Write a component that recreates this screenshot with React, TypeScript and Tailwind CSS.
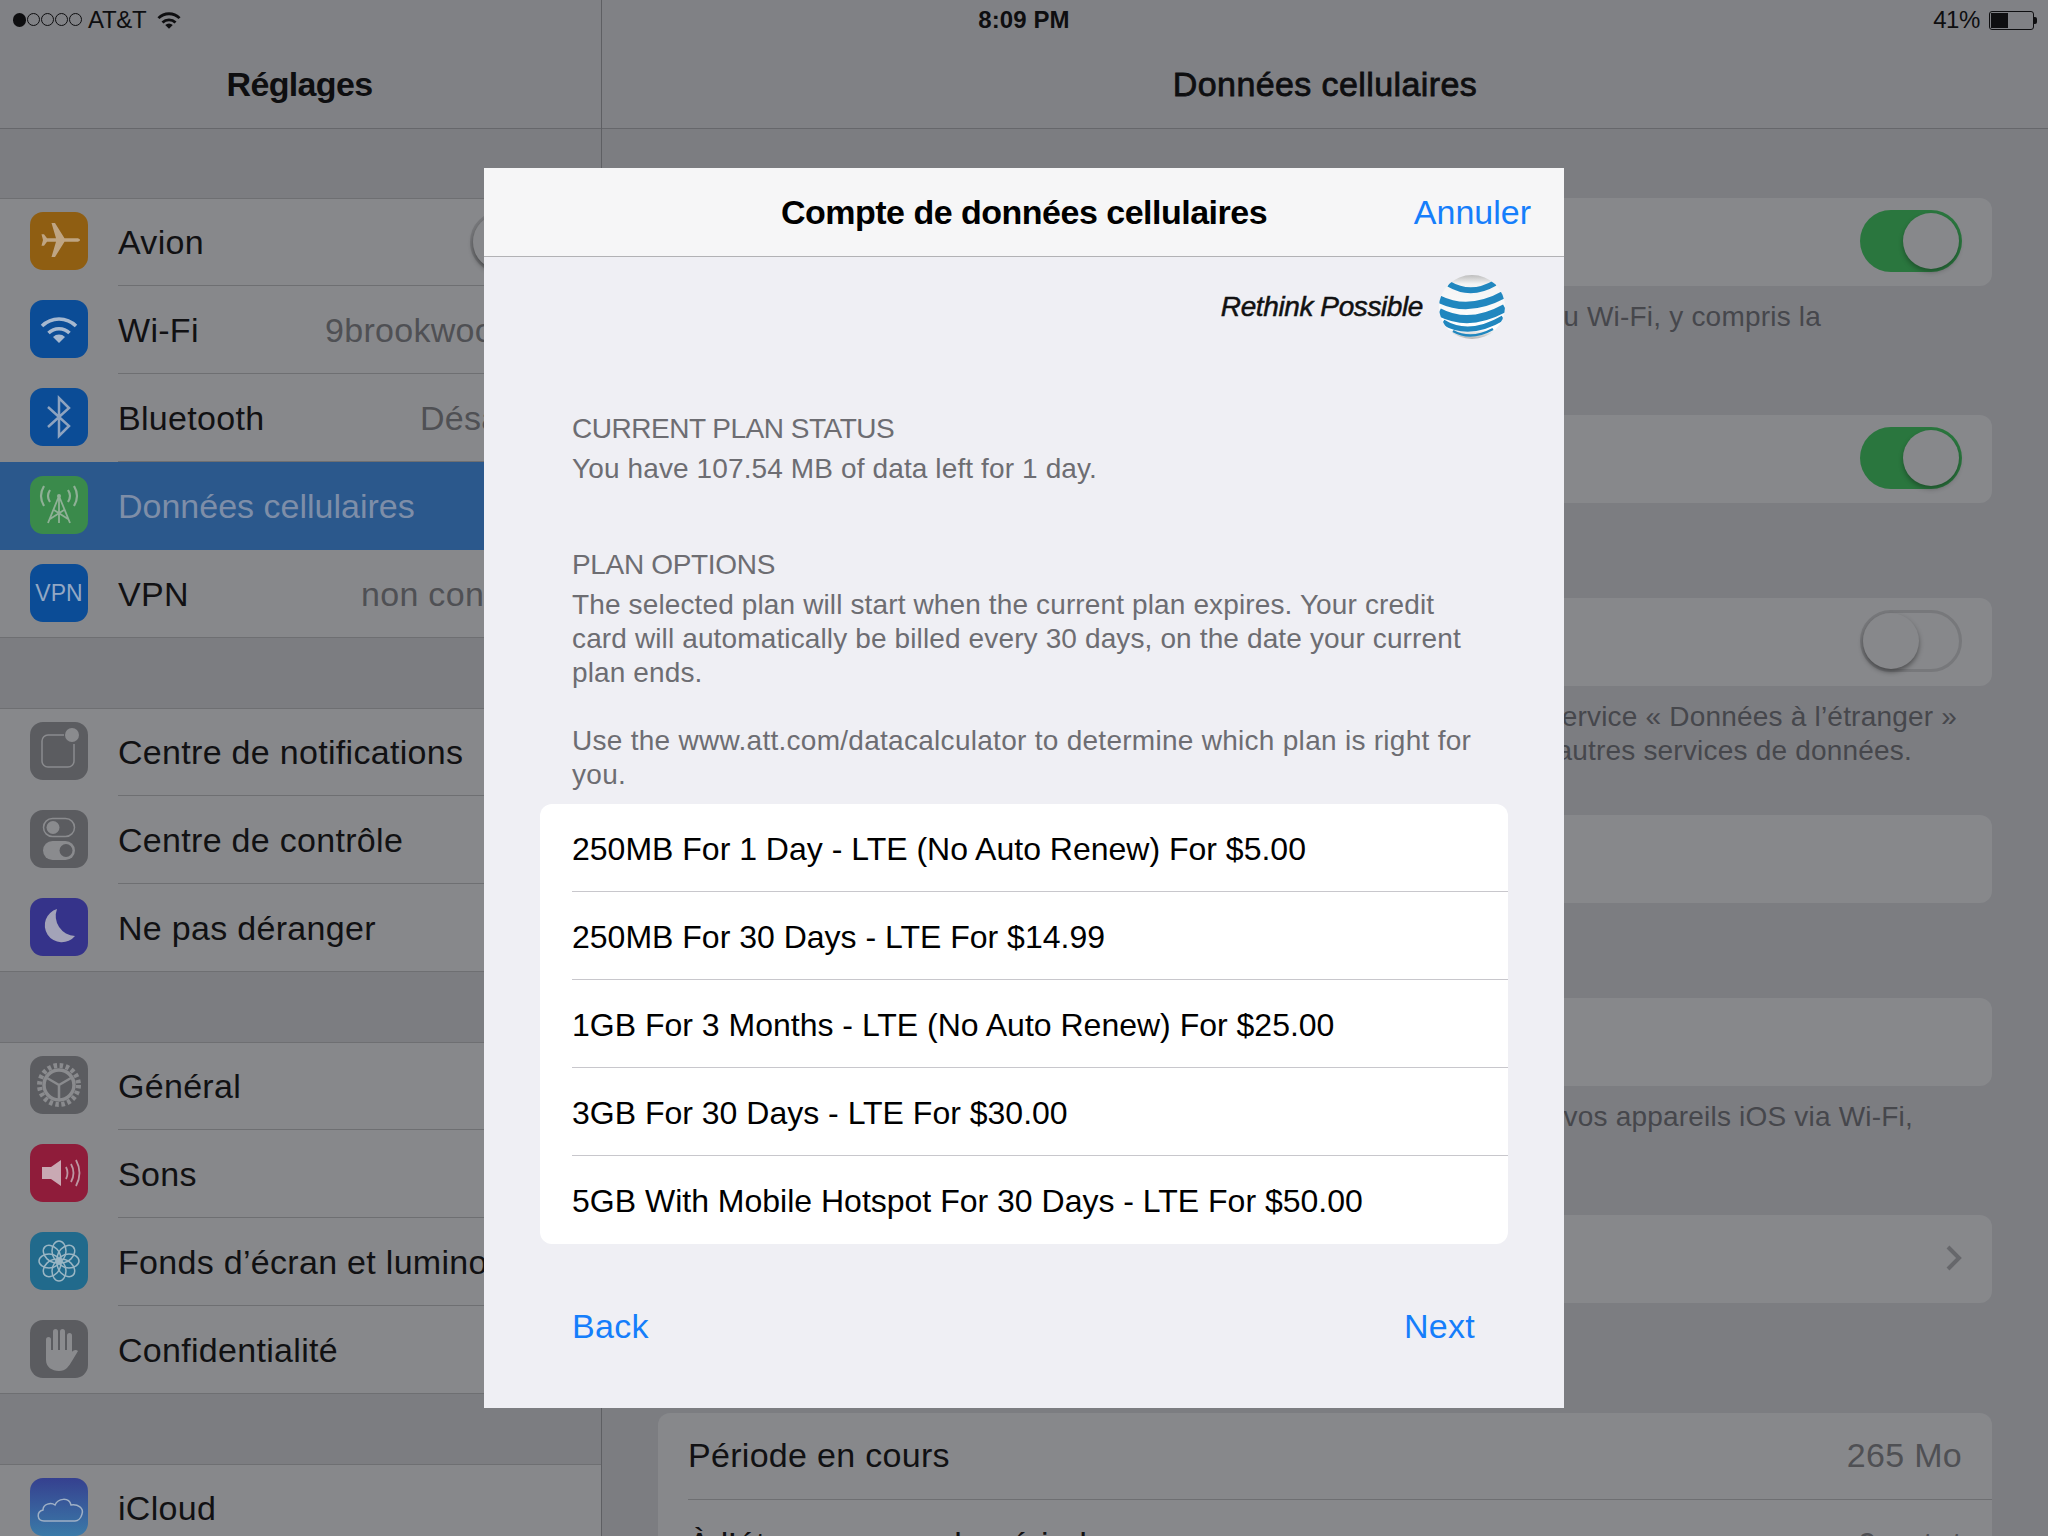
import type { ReactNode } from "react";

const SANS = "font-['Liberation_Sans',Arial,sans-serif]";

function WifiGlyph({ className, color, weight = "3.500" }: { className: string; color: string; weight?: string }) {
  return (
    <svg viewBox="0 0 58 58" className={className} fill="none" stroke={color} strokeWidth={weight}>
      <path d="M12 26a24 24 0 0 1 34 0" />
      <path d="M18.500 33a15 15 0 0 1 21 0" />
      <path d="M29 43l-6-6a8.500 8.500 0 0 1 12 0z" fill={color} stroke="none" />
    </svg>
  );
}

function Plane() {
  return (
    <svg viewBox="0 0 58 58" className="w-[58px] h-[58px]" fill="#bfa583">
      <path d="M50 28c0-1.200-1.500-1.800-3.500-1.800H34.500L25 11h-3.500l4.500 15.200H17l-3-4h-2.500l1.500 5.800-1.500 5.800H14l3-4h9l-4.500 15.200H25l9.500-15.200h12c2 0 3.500-.6 3.500-1.800z" />
    </svg>
  );
}

function Bluetooth() {
  return (
    <svg viewBox="0 0 58 58" className="w-[58px] h-[58px]" fill="none" stroke="#8ea3bf" strokeWidth="2.500">
      <path d="M18 19l21 19-10 10V10l10 10-21 19" />
    </svg>
  );
}

function Antenna() {
  return (
    <svg viewBox="0 0 58 58" className="w-[58px] h-[58px]" fill="none" stroke="#8fb096" strokeWidth="1.800">
      <path d="M29 20L18 47M29 20l11 27M29 20v27M24 34l14 9M34 34l-14 9" />
      <path d="M14 10q-6 10 0 20M20 14q-4 6 0 12M44 10q6 10 0 20M38 14q4 6 0 12" strokeWidth="2.200" />
      <circle cx="29" cy="20" r="2" fill="#8fb096" stroke="none" />
    </svg>
  );
}

function Notifications() {
  return (
    <svg viewBox="0 0 58 58" className="w-[58px] h-[58px]" fill="none" stroke="#8a8b8e" strokeWidth="1.500">
      <path d="M34 13H18a6 6 0 0 0-6 6v20a6 6 0 0 0 6 6h20a6 6 0 0 0 6-6V22" />
      <circle cx="42" cy="13" r="7" fill="#8a8b8e" stroke="none" />
    </svg>
  );
}

function Control() {
  return (
    <svg viewBox="0 0 58 58" className="w-[58px] h-[58px]" fill="none">
      <rect x="13.500" y="8.500" width="31" height="18" rx="9" stroke="#8a8b8e" strokeWidth="1.500" />
      <circle cx="23" cy="17.500" r="6.500" fill="#8a8b8e" />
      <rect x="13" y="31" width="32" height="19" rx="9.500" fill="#8a8b8e" />
      <circle cx="36" cy="40.500" r="6.500" fill="#5b5c60" />
    </svg>
  );
}

function Moon() {
  return (
    <svg viewBox="0 0 58 58" className="w-[58px] h-[58px]" fill="#a3a3b8">
      <path d="M27 11a17 17 0 1 0 18 27 20 20 0 0 1-18-27z" />
    </svg>
  );
}

function Gear() {
  return (
    <svg viewBox="0 0 58 58" className="w-[58px] h-[58px]" fill="none" stroke="#8a8b8e">
      <circle cx="29" cy="29" r="19.500" strokeWidth="5" strokeDasharray="3.500 2.630" />
      <circle cx="29" cy="29" r="15" strokeWidth="3.500" />
      <path d="M29 29L17 22M29 29l12-7M29 29v14" strokeWidth="2.500" />
    </svg>
  );
}

function Speaker() {
  return (
    <svg viewBox="0 0 58 58" className="w-[58px] h-[58px]" fill="none" stroke="#bd97a3" strokeWidth="1.800">
      <path d="M12 23h9l10-7v26l-10-7h-9z" fill="#c9a9b3" stroke="none" />
      <path d="M36 23q3 6 0 12M41 20q5 9 0 18M46 16q7 13 0 26" />
    </svg>
  );
}

function Flower() {
  return (
    <svg viewBox="0 0 58 58" className="w-[58px] h-[58px]" fill="none" stroke="#9ab6c4" strokeWidth="1.500">
      {[0, 45, 90, 135, 180, 225, 270, 315].map((angle) => (
        <ellipse key={angle} cx="29" cy="19" rx="7" ry="10" transform={`rotate(${angle} 29 29)`} />
      ))}
      <circle cx="29" cy="29" r="3" />
    </svg>
  );
}

function Hand() {
  return (
    <svg viewBox="0 0 58 58" className="w-[58px] h-[58px]" fill="#8a8b8e">
      <rect x="16" y="17" width="5" height="22" rx="2.500" />
      <rect x="23" y="9" width="5" height="28" rx="2.500" />
      <rect x="30" y="9" width="5" height="28" rx="2.500" />
      <rect x="37" y="13" width="5" height="26" rx="2.500" />
      <path d="M16 30v10c0 7 6 11 13 11s10-5 13-10l6-10c-2-2-5-1-7 2l-3 3v-6z" />
    </svg>
  );
}

function Cloud() {
  return (
    <svg viewBox="0 0 58 58" className="w-[58px] h-[58px]" fill="none" stroke="#9fb0c6" strokeWidth="1.500">
      <path d="M14 43c-7 0-8-9-1-11 0-6 8-8 12-5 3-7 14-8 16 0 7-1 13 3 11 9-1 4-4 7-7 7z" />
    </svg>
  );
}

function Globe() {
  return (
    <svg viewBox="0 0 66 64" className="w-[66px] h-[64px] flex-none">
      <defs>
        <clipPath id="globe-clip">
          <ellipse cx="33" cy="32" rx="33" ry="32" />
        </clipPath>
        <linearGradient id="globe-fill" x1="0" y1="0" x2="0" y2="1">
          <stop offset="0" stopColor="#bdbdbd" />
          <stop offset="0.14" stopColor="#f4f4f4" />
          <stop offset="0.85" stopColor="#ffffff" />
          <stop offset="1" stopColor="#b4b4b4" />
        </linearGradient>
      </defs>
      <g clipPath="url(#globe-clip)">
        <rect width="66" height="64" fill="url(#globe-fill)" />
        <g fill="none" stroke="#2187bf">
          <path d="M10 9Q32 22 56 8" strokeWidth="6" />
          <path d="M0 24Q30 39 66 19" strokeWidth="7.500" />
          <path d="M0 37Q30 53 66 33" strokeWidth="8" />
          <path d="M4 47Q30 63 64 43" strokeWidth="5" />
          <path d="M14 56Q32 66 54 54" strokeWidth="2.500" />
        </g>
      </g>
    </svg>
  );
}

type Item = {
  label: string;
  bg: string;
  icon: ReactNode;
  value?: string;
  labelWidth?: string;
  active?: boolean;
  toggle?: boolean;
};

const groups: Item[][] = [
  [
    { label: "Avion", bg: "bg-[#8f5e12]", icon: <Plane />, toggle: true, labelWidth: "w-[352px]" },
    { label: "Wi-Fi", bg: "bg-[#0b4c96]", icon: <WifiGlyph className="w-[58px] h-[58px]" color="#a6b8cf" />, value: "9brookwood", labelWidth: "w-[207px]" },
    { label: "Bluetooth", bg: "bg-[#0b4c96]", icon: <Bluetooth />, value: "Désactivé", labelWidth: "w-[302px]" },
    { label: "Données cellulaires", bg: "bg-[#3a8a4b]", icon: <Antenna />, active: true },
    {
      label: "VPN",
      bg: "bg-[#0b4c96]",
      icon: <span className={`${SANS} text-[23px] tracking-normal text-[#93a8c4]`}>VPN</span>,
      value: "non connecté",
      labelWidth: "w-[243px]",
    },
  ],
  [
    { label: "Centre de notifications", bg: "bg-[#5b5c60]", icon: <Notifications /> },
    { label: "Centre de contrôle", bg: "bg-[#5b5c60]", icon: <Control /> },
    { label: "Ne pas déranger", bg: "bg-[#35338a]", icon: <Moon /> },
  ],
  [
    { label: "Général", bg: "bg-[#5b5c60]", icon: <Gear /> },
    { label: "Sons", bg: "bg-[#8f1c3a]", icon: <Speaker /> },
    { label: "Fonds d’écran et luminosité", bg: "bg-[#216a8c]", icon: <Flower /> },
    { label: "Confidentialité", bg: "bg-[#5b5c60]", icon: <Hand /> },
  ],
  [{ label: "iCloud", bg: "bg-gradient-to-b from-[#35408f] to-[#3a7aa8]", icon: <Cloud /> }],
];

const plans = [
  "250MB For 1 Day - LTE (No Auto Renew) For $5.00",
  "250MB For 30 Days - LTE For $14.99",
  "1GB For 3 Months - LTE (No Auto Renew) For $25.00",
  "3GB For 30 Days - LTE For $30.00",
  "5GB With Mobile Hotspot For 30 Days - LTE For $50.00",
];

function Toggle({ on }: { on: boolean }) {
  if (on) {
    return (
      <div className="flex w-[102px] h-[62px] flex-none items-center justify-end rounded-full bg-[#2a763e] pr-[3px]">
        <div className="w-[56px] h-[56px] rounded-full bg-[#87888b] shadow-[0_3px_5px_rgba(0,0,0,0.3)]" />
      </div>
    );
  }
  return (
    <div className="flex w-[102px] h-[62px] flex-none items-center rounded-full border-[3px] border-[#77787b] bg-[#87888b]">
      <div className="w-[56px] h-[56px] rounded-full bg-[#87888b] shadow-[0_3px_5px_rgba(0,0,0,0.4)]" />
    </div>
  );
}

function SidebarRow({ item, last }: { item: Item; last: boolean }) {
  return (
    <div className={`flex h-[88px] items-center pl-[30px] overflow-hidden ${item.active ? "bg-[#2b588c]" : ""}`}>
      <div className={`mb-[2px] flex w-[58px] h-[58px] flex-none items-center justify-center rounded-[13px] ${item.bg}`}>{item.icon}</div>
      <div
        className={`ml-[30px] flex h-[88px] flex-1 items-center whitespace-nowrap pt-[1px] text-[34px] ${
          last || item.active ? "" : "border-b border-[#6e6f72]"
        } ${item.active ? "text-[#7e8ea8]" : "tracking-[0.3px] text-[#111113]"}`}
      >
        <span className={item.labelWidth ?? "flex-none"}>{item.label}</span>
        {item.value && <span className="text-[#4f5054]">{item.value}</span>}
        {item.toggle && <Toggle on={false} />}
      </div>
    </div>
  );
}

function Card({ children }: { children?: ReactNode }) {
  return (
    <div className="flex h-[88px] items-center justify-end rounded-[12px] bg-[#87888b] pb-[2px] pr-[30px]">{children}</div>
  );
}

export default function App() {
  return (
    <div className={`relative flex w-[2048px] h-[1536px] overflow-hidden bg-[#7c7d81] ${SANS}`}>
      {/* status bar */}
      <div className="absolute inset-x-0 top-0 grid h-[40px] grid-cols-3 items-center text-[24px] text-[#0e0e10]">
        <div className="flex items-center pl-[13px]">
          <span className="mr-[6px] flex gap-[1px]">
            <span className="h-[14px] w-[13px] rounded-full bg-[#0e0e10]" />
            {[0, 1, 2, 3].map((n) => (
              <span key={n} className="h-[13px] w-[13px] rounded-full border border-[#0e0e10]" />
            ))}
          </span>
          <span className="tracking-[-0.3px]">AT&amp;T</span>
          <WifiGlyph className="ml-[5px] w-[36px] h-[36px]" color="#0e0e10" weight="4.500" />
        </div>
        <div className="text-center font-bold text-[24px] tracking-[0.1px]">8:09 PM</div>
        <div className="flex items-center justify-end pr-[11px]">
          <span className="tracking-[-0.4px]">41%</span>
          <div className="ml-[9px] h-[19px] w-[45px] rounded-[3px] border border-[#0e0e10] p-[1px]">
            <div className="h-full w-[17px] bg-[#0e0e10]" />
          </div>
          <div className="h-[7px] w-[3px] rounded-r-[2px] bg-[#0e0e10]" />
        </div>
      </div>

      {/* settings list */}
      <aside className="w-[602px] flex-none border-r border-[#5e5f63]">
        <div className="flex h-[129px] items-end justify-center border-b border-[#66676b] bg-[#808185] pb-[18px] pr-[2px] text-[34px] font-bold tracking-[-0.65px] text-[#0e0e10]">
          Réglages
        </div>
        {groups.map((group, i) => (
          <div
            key={i}
            className={`bg-[#87888b] shadow-[inset_0_1px_0_#6e6f72,inset_0_-1px_0_#6e6f72] ${i === 0 ? "mt-[69px]" : "mt-[70px]"}`}
          >
            {group.map((item, j) => (
              <SidebarRow key={item.label} item={item} last={j === group.length - 1} />
            ))}
          </div>
        ))}
      </aside>

      {/* detail pane */}
      <main className="min-w-0 flex-1">
        <div className="flex h-[129px] items-end justify-center border-b border-[#66676b] bg-[#808185] pb-[18px] text-[34px] tracking-[0.4px] text-[#0e0e10] [-webkit-text-stroke:0.8px_#0e0e10]">
          Données cellulaires
        </div>
        <div className="px-[56px] pt-[69px]">
          <Card>
            <Toggle on />
          </Card>
          <div className="h-[129px] pt-[14px] text-right text-[28px] leading-[34px] tracking-[0.2px] text-[#46474c]">
            <div className="pr-[171px]">au Wi-Fi, y compris la</div>
          </div>
          <Card>
            <Toggle on />
          </Card>
          <div className="h-[95px]" />
          <Card>
            <Toggle on={false} />
          </Card>
          <div className="h-[129px] pt-[14px] text-right text-[28px] leading-[34px] tracking-[0.2px] text-[#46474c]">
            <div className="pr-[35px]">service « Données à l’étranger »</div>
            <div className="pr-[80px]">autres services de données.</div>
          </div>
          <Card />
          <div className="h-[95px]" />
          <Card />
          <div className="h-[129px] pt-[14px] text-right text-[28px] leading-[34px] tracking-[0.2px] text-[#46474c]">
            <div className="pr-[79px]">vos appareils iOS via Wi-Fi,</div>
          </div>
          <Card>
            <svg viewBox="0 0 16 26" className="w-[16px] h-[26px]" fill="none" stroke="#66676b" strokeWidth="4">
              <path d="M2 2l11 11L2 24" />
            </svg>
          </Card>
          <div className="h-[110px]" />
          <div className="rounded-[12px] bg-[#87888b] pl-[30px] text-[34px] tracking-[0.3px]">
            <div className="flex h-[87px] items-center justify-between border-b border-[#6e6f72] pb-[2px] pr-[30px] text-[#111113]">
              <span>Période en cours</span>
              <span className="text-[#4f5054]">265 Mo</span>
            </div>
            <div className="flex h-[88px] items-center justify-between pr-[30px] text-[#111113]">
              <span>À l’étranger pour la période</span>
              <span className="text-[#4f5054]">0 octet</span>
            </div>
          </div>
        </div>
      </main>

      {/* account sheet */}
      <div className="absolute left-[484px] top-[168px] flex h-[1240px] w-[1080px] flex-col bg-[#efeff4]">
        <div className="relative flex h-[89px] flex-none items-center justify-center border-b border-[#b2b2b5] bg-[#f6f6f7]">
          <span className="text-[34px] font-bold tracking-[-0.5px] text-black">Compte de données cellulaires</span>
          <span className="absolute right-[33px] text-[34px] text-[#157efb]">Annuler</span>
        </div>
        <div className="mt-[18px] flex items-center justify-end gap-[16px] pr-[59px]">
          <span className="text-[28px] italic tracking-[-0.4px] text-[#111] [-webkit-text-stroke:0.5px_#111]">Rethink Possible</span>
          <Globe />
        </div>
        <div className="mt-[73px] px-[88px] text-[28px] leading-[34px] text-[#6d6d72]">
          <p className="tracking-[-0.48px]">CURRENT PLAN STATUS</p>
          <p className="mt-[6px] tracking-[0.12px]">You have 107.54 MB of data left for 1 day.</p>
          <p className="mt-[62px] tracking-[-0.33px]">PLAN OPTIONS</p>
          <p className="mt-[6px] tracking-[0.13px]">
            The selected plan will start when the current plan expires. Your credit card will automatically be billed every 30 days, on the date your current plan ends.
          </p>
          <p className="mt-[34px] tracking-[0.28px]">Use the www.att.com/datacalculator to determine which plan is right for you.</p>
        </div>
        <div className="mx-[56px] mt-[12px] rounded-[12px] bg-white pl-[32px] text-[32px] text-black">
          {plans.map((plan, i) => (
            <div key={plan} className={`flex h-[88px] items-center pt-[2px] ${i < plans.length - 1 ? "border-b border-[#c8c7cc]" : ""}`}>
              {plan}
            </div>
          ))}
        </div>
        <div className="mt-[52px] flex items-center justify-between pl-[88px] pr-[89px] text-[34px] leading-[60px] tracking-[0.3px] text-[#157efb]">
          <span>Back</span>
          <span>Next</span>
        </div>
      </div>
    </div>
  );
}
